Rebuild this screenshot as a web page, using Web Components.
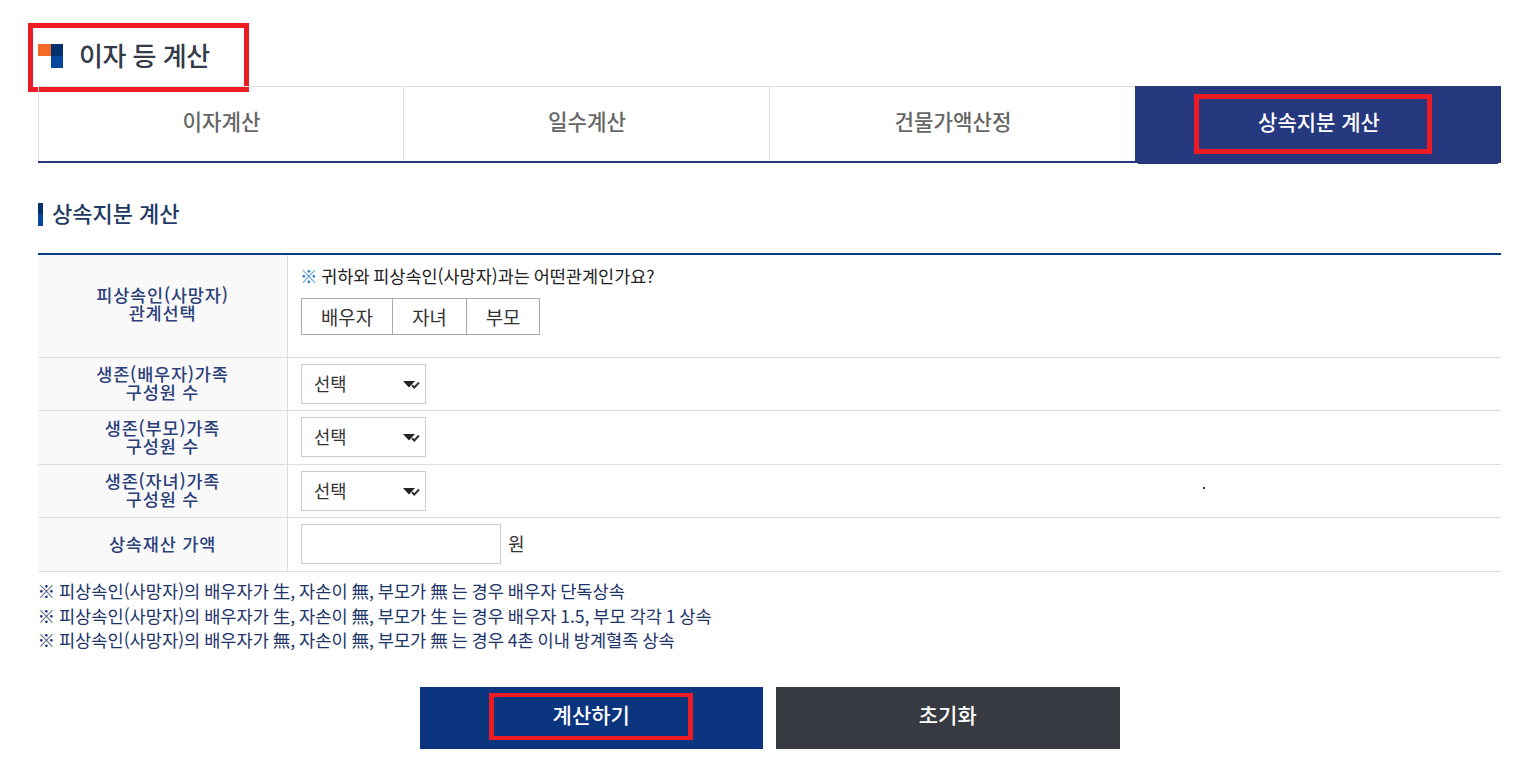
<!DOCTYPE html>
<html lang="ko"><head><meta charset="utf-8"><title>이자 등 계산</title>
<style>
html,body{margin:0;background:#fff}
body{font-family:"Noto Sans CJK KR","Noto Sans",sans-serif;color:#222;height:783px;overflow:hidden}
</style></head><body>
<calc-page>
  <page-title>이자 등 계산</page-title>
  <tab-bar>
    <tab-item>이자계산</tab-item>
    <tab-item>일수계산</tab-item>
    <tab-item>건물가액산정</tab-item>
    <tab-item active marked>상속지분 계산</tab-item>
  </tab-bar>
  <section-heading>상속지분 계산</section-heading>
  <form-table>
    <form-row h="103" top>
      <span slot="label">피상속인(사망자)<br>관계선택</span>
      <relation-picker></relation-picker>
    </form-row>
    <form-row h="53"><span slot="label">생존(배우자)가족<br>구성원 수</span><select-box></select-box></form-row>
    <form-row h="54"><span slot="label">생존(부모)가족<br>구성원 수</span><select-box></select-box></form-row>
    <form-row h="53" dot><span slot="label">생존(자녀)가족<br>구성원 수</span><select-box></select-box></form-row>
    <form-row h="54"><span slot="label">상속재산 가액</span><amount-field></amount-field></form-row>
  </form-table>
  <note-list>
    <div>※ 피상속인(사망자)의 배우자가 生, 자손이 無, 부모가 無 는 경우 배우자 단독상속</div>
    <div>※ 피상속인(사망자)의 배우자가 生, 자손이 無, 부모가 生 는 경우 배우자 1.5, 부모 각각 1 상속</div>
    <div>※ 피상속인(사망자)의 배우자가 無, 자손이 無, 부모가 無 는 경우 4촌 이내 방계혈족 상속</div>
  </note-list>
  <action-bar>
    <action-button tone="blue" marked>계산하기</action-button>
    <action-button tone="dark">초기화</action-button>
  </action-bar>
</calc-page>
<script>
const def=(name,css,html,init)=>customElements.define(name,class extends HTMLElement{
  connectedCallback(){
    if(this.shadowRoot)return;
    const r=this.attachShadow({mode:'open'});
    r.innerHTML=`<style>${css}</style>${typeof html==='function'?html(this):html}`;
    if(init)init(this,r);
  }
});
const MARK='.mark{position:absolute;box-sizing:border-box;border:5px solid #ed1c24;pointer-events:none}';

def('calc-page',':host{display:block;box-sizing:border-box;width:1463px;margin-left:38px}','<slot></slot>');

def('page-title',`:host{display:flex;align-items:flex-start;gap:16px;position:relative;height:86px;box-sizing:border-box;padding-top:44px;
  font-size:26px;font-weight:500;color:#333a48;letter-spacing:-.5px}
  .t{line-height:26px;margin-top:-2px}
  ${MARK} .mark{left:-10px;top:23px;width:221px;height:69px}
  svg{display:block}`,
`<svg width="25" height="24" viewBox="0 0 25 24"><rect width="13" height="12" fill="#f36b25"/><rect x="13" width="12" height="12" fill="#03316f"/><rect x="13" y="12" width="12" height="12" fill="#04479c"/></svg><span class="t"><slot></slot></span><div class="mark"></div>`);

def('tab-bar',`:host{display:grid;grid-template-columns:365px 366px 366px 366px;height:77px;box-sizing:border-box;border-bottom:2px solid #26397f}`,'<slot></slot>');

def('tab-item',`:host{display:flex;align-items:center;justify-content:center;position:relative;box-sizing:border-box;height:75px;
   border-top:1px solid #ddd;border-left:1px solid #ddd;font-size:21.200px;font-weight:500;color:#666;padding:0 0 7px 1px}
  :host([active]){background:#26397f;color:#fff;border:0;height:77px;font-size:21px;padding:0 0 7px 2px}
  :host([active])::after{content:"";position:absolute;left:3px;right:3px;bottom:-1px;height:1px;background:#26397f}
  ${MARK} .mark{left:59px;top:8px;width:238px;height:60px}`,
 h=>`<slot></slot>${h.hasAttribute('marked')?'<div class="mark"></div>':''}`);

def('section-heading',`:host{display:flex;align-items:center;gap:9px;box-sizing:border-box;height:90px;padding-top:27px;padding-bottom:14px;
   font-size:22px;font-weight:500;color:#1f3a63}
  i{display:block;width:5px;height:23px;background:linear-gradient(#03316f 50%,#04479c 50%)}
  span{position:relative;top:-3px}`,'<i></i><span><slot></slot></span>');

def('form-table',`:host{display:block;border-top:2px solid #0b3b85}`,'<slot></slot>');

def('form-row',`:host{display:grid;grid-template-columns:250px 1fr;border-bottom:1px solid #ddd;box-sizing:border-box;position:relative}
  .th{background:#f9f9f9;border-right:1px solid #ddd;display:flex;align-items:center;justify-content:center;text-align:center;
      font-size:17.500px;letter-spacing:.8px;font-weight:500;line-height:18px;color:#2b4079;box-sizing:border-box;padding-bottom:2px}
  .td{display:flex;align-items:center;padding-left:13px;padding-bottom:1px;font-size:17.200px}
  :host([top]) .th{padding-bottom:5px}
  .dot{position:absolute;left:1165px;top:22px;width:2px;height:2px;background:#333}`,
 h=>`<style>:host{height:${h.getAttribute('h')}px}</style><div class="th"><slot name="label"></slot></div><div class="td"><slot></slot></div>${h.hasAttribute('dot')?'<div class="dot"></div>':''}`);

def('relation-picker',`:host{display:block;align-self:flex-start}
  p{margin:8px 0 9px -1px;font-size:17.500px;word-spacing:-1.200px;line-height:26px;color:#222}
  b{font-weight:400;color:#1a7fc4}
  .g{display:flex}
  seg-button+seg-button{margin-left:-1px}`,
 `<p><b>※</b> 귀하와 피상속인(사망자)과는 어떤관계인가요?</p><div class="g"><seg-button style="width:92px">배우자</seg-button><seg-button style="width:75px">자녀</seg-button><seg-button style="width:74px">부모</seg-button></div>`);

def('seg-button',`:host{display:flex;align-items:center;justify-content:center;box-sizing:border-box;height:37px;border:1px solid #aaa;font-size:18.800px;color:#333;background:#fff}`,'<slot></slot>');

def('select-box',`:host{display:block;position:relative;width:125px;height:40px}
  select{appearance:none;-webkit-appearance:none;width:100%;height:100%;box-sizing:border-box;border:1px solid #ccc;background:#fff;border-radius:0;
    font:400 17.700px "Noto Sans CJK KR",sans-serif;color:#333;padding:0 0 2px 12px;margin:0}
  svg{position:absolute;right:6px;top:16px;pointer-events:none}`,
 `<select><option>선택</option></select><svg width="17" height="9" viewBox="0 0 17 9"><path d="M0 1h12L6 7.500z" fill="#222"/><path d="M9 5.200l2.300 2.300L16 2.500" fill="none" stroke="#333" stroke-width="2"/></svg>`);

def('amount-field',`:host{display:flex;align-items:center;gap:7px;font-size:18px;color:#333}
  input{width:200px;height:40px;box-sizing:border-box;border:1px solid #ccc;background:#fff;margin:0;padding:0 10px}
  span{position:relative;top:-1px}`,
 `<input type="text"><span>원</span>`);

def('note-list',`:host{display:block;padding-top:7px;font-size:17.600px;word-spacing:-1.100px;line-height:24.500px;color:#1e3469;height:98px;box-sizing:border-box;margin-left:-0.5px}`,'<slot></slot>');

def('action-bar',`:host{display:flex;justify-content:center;gap:13px;padding-top:17px}`,'<slot></slot>');

def('action-button',`:host{display:flex;align-items:center;justify-content:center;position:relative;width:343.500px;height:62px;font-size:21px;font-weight:500;color:#fff;padding-bottom:8px;box-sizing:border-box}
  :host([tone=blue]){background:#0c3580}
  :host([tone=dark]){background:#383a42}
  ${MARK} .mark{border-width:4px 5px;left:69px;top:6px;width:204px;height:47px}`,
 h=>`<slot></slot>${h.hasAttribute('marked')?'<div class="mark"></div>':''}`);
</script>
</body></html>
